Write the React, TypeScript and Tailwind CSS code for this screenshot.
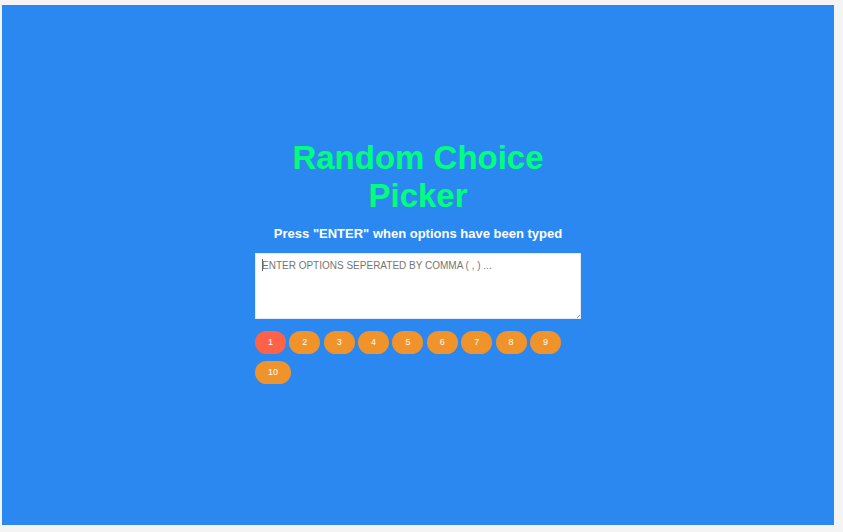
import { Fragment, useState } from "react";

const choices = ["1", "2", "3", "4", "5", "6", "7", "8", "9", "10"];

export default function App() {
  const [text, setText] = useState("");

  return (
    <div className="flex min-h-screen bg-[#f4f4f4] pt-[5px] pr-[9px] pb-[7px] pl-[2px] font-['Liberation_Sans',Arial,sans-serif]">
      <main className="flex flex-1 items-center justify-center bg-[#2b88f0] pb-[5px]">
        <div className="w-[326px]">
          <h1 className="text-center text-[33px] leading-[38px] font-bold text-[#00ff7f]">
            Random Choice
            <br />
            Picker
          </h1>
          <label
            htmlFor="options"
            className="mt-[11px] block text-center text-[13px] leading-[15px] font-bold text-white"
          >
            Press "ENTER" when options have been typed
          </label>
          <div className="relative mt-3">
            <textarea
              id="options"
              value={text}
              onChange={(event) => setText(event.target.value)}
              placeholder="ENTER OPTIONS SEPERATED BY COMMA ( , ) ..."
              className="block h-[66px] w-full resize-none border border-[#e3eaf2] bg-white px-[6px] py-[5px] text-[10px] leading-[14px] text-black outline-none placeholder:text-[#757575]"
            />
            {text === "" && (
              <span className="pointer-events-none absolute top-[6px] left-[7px] h-3 w-px bg-[#666666]" />
            )}
            <svg
              aria-hidden="true"
              viewBox="0 0 3 3"
              className="pointer-events-none absolute right-px bottom-px size-[3px]"
            >
              <path d="M0 3L3 0" stroke="#8795a8" strokeWidth="1" />
            </svg>
          </div>
          <div className="mt-2 text-[12px] leading-[30px]">
            {choices.map((choice, i) => (
              <Fragment key={choice}>
                <button
                  type="button"
                  className={`inline-block h-[23px] rounded-full px-[13px] align-middle text-[9px] leading-[23px] text-white ${i === 0 ? "bg-[#ff6347]" : "bg-[#f0932b]"}`}
                >
                  {choice}
                </button>{" "}
              </Fragment>
            ))}
          </div>
        </div>
      </main>
    </div>
  );
}
